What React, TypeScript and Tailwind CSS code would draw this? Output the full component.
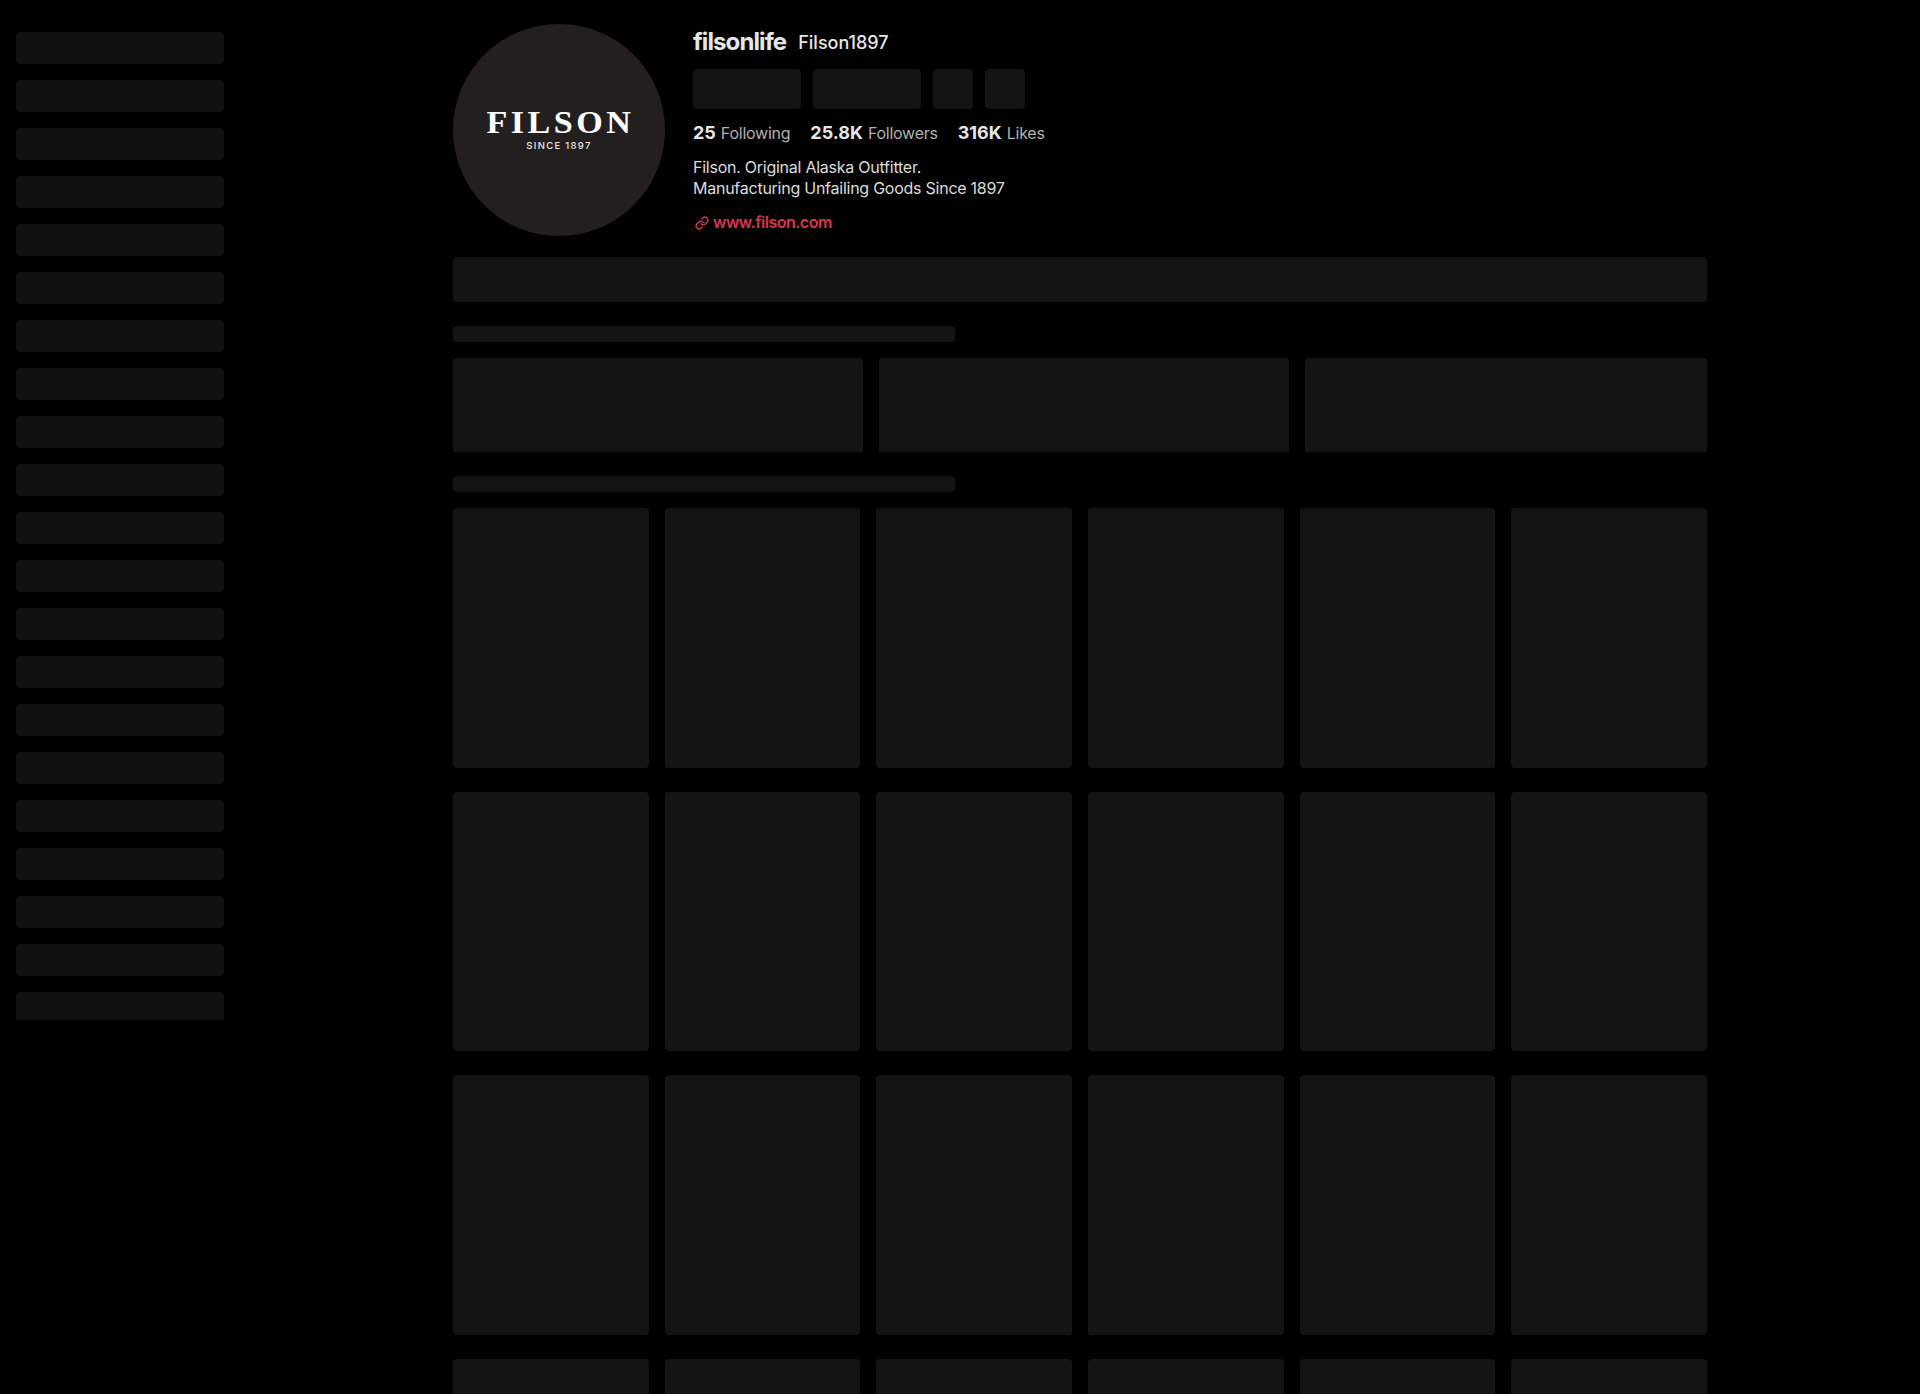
import React from 'react';
import { Link } from 'lucide-react';

const sidebarRows = Array.from({ length: 21 }, (_, i) => i);
const featuredCards = [0, 1, 2];
const gridCards = Array.from({ length: 24 }, (_, i) => i);

const App: React.FC = () => {
    return (
        <div className="h-screen overflow-hidden bg-black flex font-['Inter',sans-serif]">
            {/* Sidebar skeleton */}
            <aside className="w-[240px] h-[1020px] shrink-0 overflow-hidden px-4 pt-8">
                <div className="flex flex-col gap-4">
                    {sidebarRows.map((i) => (
                        <div key={i} className="h-8 shrink-0 rounded bg-[#111111]" />
                    ))}
                </div>
            </aside>

            <main className="w-[1254px] ml-[213px] pt-6">
                {/* Profile header */}
                <div className="flex gap-7">
                    <div className="w-[212px] h-[212px] shrink-0 rounded-full bg-[#231f20] flex flex-col items-center justify-center">
                        <span className="font-['Liberation_Serif',serif] font-bold text-[31px] leading-[26px] tracking-[3.2px] pl-[3px] mt-[2px] scale-x-[1.1] text-white">FILSON</span>
                        <span className="mt-[4px] font-['Inter',sans-serif] font-medium text-[9.5px] leading-[12px] tracking-[1.3px] text-[#e6e6e6]">SINCE 1897</span>
                    </div>

                    <div className="flex flex-col">
                        <div className="flex items-center gap-3 h-[32px] mt-[2px]">
                            <h1 className="text-[24px] leading-[32px] font-bold tracking-[-0.9px] text-[#e6e6e6]">filsonlife</h1>
                            <span className="mt-[2px] text-[18px] leading-[24px] font-medium text-[#e6e6e6]">Filson1897</span>
                        </div>
                        <div className="flex gap-3 mt-[11px]">
                            <div className="w-[108px] h-10 rounded bg-[#141414]" />
                            <div className="w-[108px] h-10 rounded bg-[#141414]" />
                            <div className="w-10 h-10 rounded bg-[#141414]" />
                            <div className="w-10 h-10 rounded bg-[#141414]" />
                        </div>
                        <div className="flex items-baseline gap-5 mt-[12px] h-[24px]">
                            <div className="flex items-baseline gap-[5px]">
                                <strong className="text-[18px] leading-[24px] font-bold text-[#e6e6e6]">25</strong>
                                <span className="text-[16px] leading-[24px] tracking-[-0.25px] text-[#b0b0b0]">Following</span>
                            </div>
                            <div className="flex items-baseline gap-[5px]">
                                <strong className="text-[18px] leading-[24px] font-bold text-[#e6e6e6]">25.8K</strong>
                                <span className="text-[16px] leading-[24px] tracking-[-0.25px] text-[#b0b0b0]">Followers</span>
                            </div>
                            <div className="flex items-baseline gap-[5px]">
                                <strong className="text-[18px] leading-[24px] font-bold text-[#e6e6e6]">316K</strong>
                                <span className="text-[16px] leading-[24px] tracking-[-0.25px] text-[#b0b0b0]">Likes</span>
                            </div>
                        </div>
                        <p className="mt-[12px] text-[16px] leading-[21px] tracking-[-0.25px] text-[#dcdcdc]">
                            Filson. Original Alaska Outfitter.
                            <br />
                            Manufacturing Unfailing Goods Since 1897
                        </p>
                        <div className="flex items-center gap-[4px] mt-[12px] h-[22px] pl-[2px]">
                            <Link size={14} strokeWidth={2.4} className="text-[#dc3350] mt-[2px]" />
                            <span className="text-[16px] leading-[22px] font-semibold tracking-[-0.5px] text-[#dc3350]">www.filson.com</span>
                        </div>
                    </div>
                </div>

                {/* Tabs skeleton */}
                <div className="mt-[21px] h-[45px] rounded bg-[#141414]" />

                {/* Featured row */}
                <div className="mt-6 w-2/5 h-4 rounded bg-[#141414]" />
                <div className="mt-4 h-[94px] overflow-hidden flex gap-4">
                    {featuredCards.map((i) => (
                        <div key={i} className="w-[410px] h-[200px] shrink-0 rounded bg-[#141414]" />
                    ))}
                </div>

                {/* Video grid */}
                <div className="mt-6 w-2/5 h-4 rounded bg-[#141414]" />
                <div className="mt-4 grid grid-cols-6 gap-x-4 gap-y-6">
                    {gridCards.map((i) => (
                        <div key={i} className="h-[259.5px] rounded bg-[#141414]" />
                    ))}
                </div>
            </main>
        </div>
    );
};

export default App;
